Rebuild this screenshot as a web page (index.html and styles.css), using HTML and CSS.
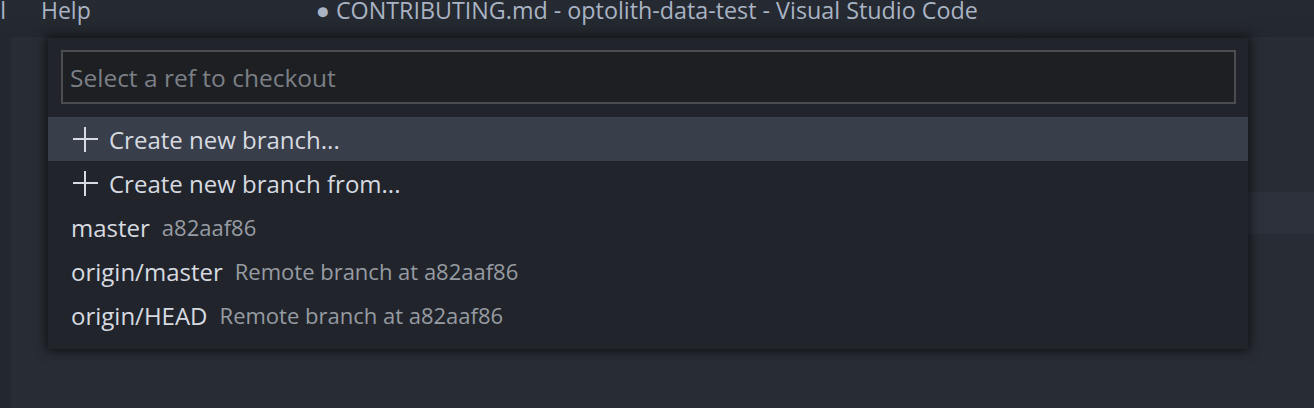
FILE: index.html
```html
<!DOCTYPE html>
<html>
<head>
<meta charset="utf-8">
<link rel="stylesheet" href="styles.css">
</head>
<body>
<div class="window">
  <header class="titlebar">
    <div class="menu-clip"><span class="menu-item">Terminal</span></div>
    <span class="menu-item help">Help</span>
    <span class="title">● CONTRIBUTING.md - optolith-data-test - Visual Studio Code</span>
  </header>
  <div class="workbench">
    <div class="activity"></div>
    <div class="editor">
      <div class="line-highlight"></div>
    </div>
  </div>
  <div class="quick-pick">
    <div class="input">Select a ref to checkout</div>
    <ul class="list">
      <li class="row selected">
        <svg class="plus" viewBox="0 0 26 26" width="26" height="26"><path d="M13 1v25M1 13h25" stroke="#d7dae0" stroke-width="2" fill="none"/></svg>
        <span class="label">Create new branch...</span>
      </li>
      <li class="row">
        <svg class="plus" viewBox="0 0 26 26" width="26" height="26"><path d="M13 1v25M1 13h25" stroke="#d7dae0" stroke-width="2" fill="none"/></svg>
        <span class="label">Create new branch from...</span>
      </li>
      <li class="row"><span class="label">master</span><span class="desc">a82aaf86</span></li>
      <li class="row"><span class="label">origin/master</span><span class="desc">Remote branch at a82aaf86</span></li>
      <li class="row"><span class="label">origin/HEAD</span><span class="desc">Remote branch at a82aaf86</span></li>
    </ul>
  </div>
</div>
</body>
</html>
```
FILE: styles.css
```css
* { box-sizing: border-box; }
html, body { margin: 0; padding: 0; }
body {
  width: 1314px;
  height: 408px;
  overflow: hidden;
  background: #282c34;
  font-family: "Open Sans", "Noto Sans", sans-serif;
}
.window {
  position: relative;
  width: 1314px;
  height: 408px;
  display: flex;
  flex-direction: column;
}
.titlebar {
  height: 37px;
  flex: none;
  display: flex;
  align-items: flex-start;
  background: linear-gradient(#262a32, #23272e);
  color: #a9b3c3;
  font-size: 23px;
  line-height: 20px;
  white-space: nowrap;
}
.menu-clip {
  width: 6px;
  overflow: hidden;
  display: flex;
  justify-content: flex-end;
  flex: none;
}
.help { margin-left: 35px; }
.title { margin-left: 225px; font-size: 23.3px; }
.workbench {
  flex: 1;
  display: flex;
}
.activity {
  width: 11px;
  background: #23272e;
}
.editor {
  flex: 1;
  padding-top: 155px;
}
.line-highlight {
  height: 42px;
  margin-left: 200px;
  background: #2c313b;
}
.quick-pick {
  position: absolute;
  left: 48px;
  top: 38px;
  width: 1200px;
  padding: 12px 12px 12px 13px;
  background: #21252b;
  box-shadow: 0 0 10px 2px rgba(0,0,0,0.6);
}
.input {
  height: 54px;
  border: 2px solid #4a4c50;
  background: #1d1f23;
  color: #7c7f86;
  font-size: 24.5px;
  padding-left: 7px;
  display: flex;
  align-items: center;
}
.list {
  list-style: none;
  margin: 13px -12px 0 -13px;
  padding: 0;
}
.row {
  height: 44px;
  display: flex;
  align-items: center;
  padding-left: 23px;
  color: #d7dae0;
  font-size: 24px;
  white-space: nowrap;
}
.row.selected { background: #383e4a; }
.plus { margin: 0 11px 0 1px; flex: none; }
.desc {
  margin-left: 12px;
  color: #979ba3;
  font-size: 22px;
}
```
